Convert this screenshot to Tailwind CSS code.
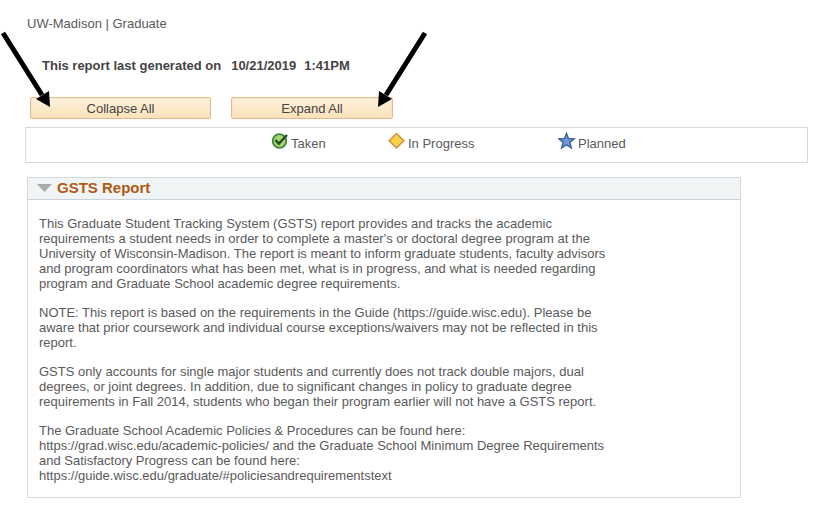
<!DOCTYPE html>
<html lang="en">

<head>
    <meta charset="UTF-8">
    <meta name="viewport" content="width=device-width, initial-scale=1.0">
    <title>GSTS Report</title>

    <!-- TailwindCSS -->
    <script src="https://cdn.jsdelivr.net/npm/@tailwindcss/browser@4"></script>
</head>

<body class="bg-white font-['Liberation_Sans',Arial,sans-serif] text-[13px] leading-[15px] text-[#5a5a5a]">

    <div class="relative pt-4 pr-[19px] pb-2 pl-[25px]">
        <p class="pl-[2px]">UW-Madison | Graduate</p>

        <p class="mt-[27px] flex gap-[10px] pl-[17px] font-bold text-[#444]">
            <span>This report last generated on</span>
            <span class="flex gap-2"><span>10/21/2019</span><span>1:41PM</span></span>
        </p>

        <div class="mt-6 flex gap-5 pl-[5px]">
            <button type="button" class="h-[22px] w-[181px] rounded-xs border border-[#e3b98e] bg-linear-to-b from-[#fdf0d9] to-[#fbe3bb] text-[#444] shadow-[inset_0_0_1px_#e3b98e]">Collapse All</button>
            <button type="button" class="h-[22px] w-[162px] rounded-xs border border-[#e3b98e] bg-linear-to-b from-[#fdf0d9] to-[#fbe3bb] text-[#444] shadow-[inset_0_0_1px_#e3b98e]">Expand All</button>
        </div>

        <!-- Legend -->
        <ul class="mt-2 flex h-9 border border-[#d6dae0] pt-1 pl-[245px]">
            <li class="flex w-[117px] gap-[2px]">
                <svg class="h-[18px] w-[18px]" viewBox="0 0 18 18" aria-hidden="true">
                    <circle cx="8.5" cy="9" r="6.8" fill="#a5d86b" stroke="#3f8543" stroke-width="1.8" />
                    <path d="M4.5 8l3.3 3.8L16 3" fill="none" stroke="#234a20" stroke-width="2.4" />
                </svg>
                <span class="pt-1">Taken</span>
            </li>
            <li class="flex w-[170px] gap-[2px]">
                <svg class="h-[18px] w-[18px]" viewBox="0 0 18 18" aria-hidden="true">
                    <path d="M8.5 1.5L15.8 8.7l-7.3 7.2L1.2 8.700z" fill="#f5d545" stroke="#cf9542" stroke-width="1.6" />
                </svg>
                <span class="pt-1">In Progress</span>
            </li>
            <li class="flex gap-[2px]">
                <svg class="h-[18px] w-[18px]" viewBox="0 0 18 18" aria-hidden="true">
                    <path d="M8.5 1.5l2 5 5.7.3-4.400 3.500 1.500 5.500-4.800-3-4.800 3 1.500-5.500L.8 6.800l5.700-.3z" fill="#6f98d4" stroke="#41669e" stroke-width="1.5" />
                </svg>
                <span class="pt-1">Planned</span>
            </li>
        </ul>

        <!-- Report -->
        <section class="mt-[14px] mr-[67px] ml-[2px] border border-[#d3d8df]">
            <h2 class="border-b border-[#c9d2da] bg-[#f0f4f5] text-[15px] font-bold text-[#b05a12]">
                <button type="button" aria-expanded="true" class="flex h-[21px] items-center gap-[5px] pb-[2px] pl-[9px]">
                    <svg class="h-2 w-[15px]" viewBox="0 0 15 8" fill="#aaa" aria-hidden="true">
                        <path d="M0 0h15L7.5 8z" />
                    </svg>
                    GSTS Report
                </button>
            </h2>
            <div class="flex flex-col gap-[14px] px-[11px] pt-4 pb-[14px]">
                <p>
                    This Graduate Student Tracking System (GSTS) report provides and tracks the academic<br>
                    requirements a student needs in order to complete a master's or doctoral degree program at the<br>
                    University of Wisconsin-Madison. The report is meant to inform graduate students, faculty advisors<br>
                    and program coordinators what has been met, what is in progress, and what is needed regarding<br>
                    program and Graduate School academic degree requirements.
                </p>
                <p>
                    NOTE: This report is based on the requirements in the Guide (https://guide.wisc.edu). Please be<br>
                    aware that prior coursework and individual course exceptions/waivers may not be reflected in this<br>
                    report.
                </p>
                <p>
                    GSTS only accounts for single major students and currently does not track double majors, dual<br>
                    degrees, or joint degrees. In addition, due to significant changes in policy to graduate degree<br>
                    requirements in Fall 2014, students who began their program earlier will not have a GSTS report.
                </p>
                <p>
                    The Graduate School Academic Policies &amp; Procedures can be found here:<br>
                    https://grad.wisc.edu/academic-policies/ and the Graduate School Minimum Degree Requirements<br>
                    and Satisfactory Progress can be found here:<br>
                    https://guide.wisc.edu/graduate/#policiesandrequirementstext
                </p>
            </div>
        </section>

        <!-- Arrows pointing at the two buttons -->
        <svg class="pointer-events-none absolute top-[30px] left-0 h-20 w-[52px]" viewBox="0 0 52 80" aria-hidden="true">
            <path d="M3 3l39 62" stroke="#000" stroke-width="5" />
            <path d="M50 77L36 69l13-8z" />
        </svg>
        <svg class="pointer-events-none absolute top-[30px] left-[376px] h-20 w-[52px]" viewBox="0 0 52 80" aria-hidden="true">
            <path d="M49 3L10 65" stroke="#000" stroke-width="5" />
            <path d="M2 77l1-16 13 8z" />
        </svg>
    </div>

</body>

</html>
